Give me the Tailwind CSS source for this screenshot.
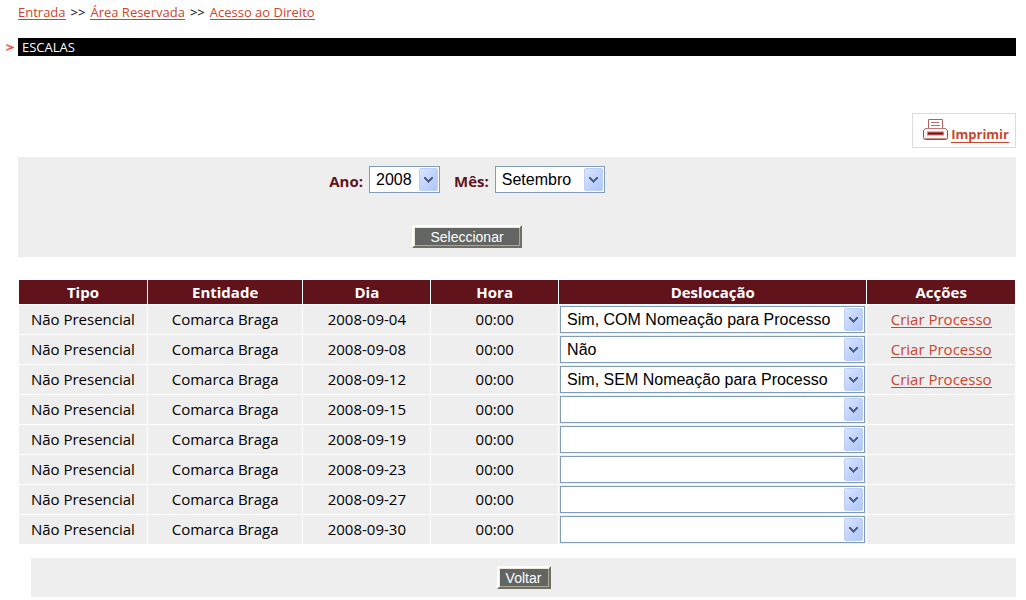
<!DOCTYPE html>
<html lang="pt">
<head>
<meta charset="utf-8">
<meta name="viewport" content="width=device-width, initial-scale=1">
<title>Escalas</title>
<script src="https://cdn.jsdelivr.net/npm/@tailwindcss/browser@4"></script>
</head>
<body class="bg-white font-['Open_Sans',sans-serif] text-black">
<div class="pr-[10px] pl-[18px]">
  <nav aria-label="Caminho" class="flex h-[38px] gap-[5px] pt-[2px] text-[13px] leading-5">
    <a href="#" class="h-[18px] border-b border-[#c9462c] text-[#c9462c]">Entrada</a><span>&gt;&gt;</span>
    <a href="#" class="h-[18px] border-b border-[#c9462c] text-[#c9462c]">Área Reservada</a><span>&gt;&gt;</span>
    <a href="#" class="h-[18px] border-b border-[#c9462c] text-[#c9462c]">Acesso ao Direito</a>
  </nav>
  <div class="-ml-3 flex items-center">
    <svg class="mr-1 h-2 w-2" viewBox="0 0 8 8" aria-hidden="true"><path d="M0 2 7 4.500 0 7" fill="none" stroke="#d65b43" stroke-width="1.500"/><path d="M0 2h3M0 7h3" stroke="#e59c8c"/></svg>
    <h1 class="grow bg-black pl-1 text-[13px] leading-[18px] text-white">ESCALAS</h1>
  </div>
  <div class="mt-[57px] flex justify-end">
    <a href="#" class="flex h-[35px] w-[104px] items-start justify-between border border-[#dcdcdc] pt-[5px] pr-[6px] pl-[10px] text-[13px] font-bold text-[#c9462c]">
      <svg class="h-[21px] w-[25px]" viewBox="0 0 25 21" fill="none" aria-hidden="true">
        <path d="M5.500 9.500V.5h14v9" fill="#fff" stroke="#b06060"/><path d="M8 3.500h8M8 6.500h9" stroke="#b86a6a"/>
        <path d="M2.500 9.500h20l2 2v7q0 2-2 2h-20q-2 0-2-2v-7z" fill="#fff3f0" stroke="#a64444"/>
        <path d="M3 9.500h19" stroke="#bd7a7a"/><path d="M4 12.500h17v4H4z" fill="#cf8080"/><path d="M5 14.500h15" stroke="#780f18" stroke-width="2"/>
        <path d="M2 19.500h21" stroke="#c78b8b"/>
      </svg>
      <span class="mt-[5px] h-[19px] border-b border-[#c9462c] leading-5">Imprimir</span>
    </a>
  </div>
  <form class="mt-[9px] flex h-[100px] flex-col items-center bg-[#eee] pt-[9px] pr-[100px]">
    <div class="flex items-center text-[15px] font-bold text-[#61131b]">
      <label for="ano" class="mt-1 mr-[6px]">Ano:</label>
      <div class="grid w-[71px] font-['Liberation_Sans',sans-serif] text-base font-normal text-black">
        <select id="ano" class="col-start-1 row-start-1 h-[27px] appearance-none border border-[#7f9db9] bg-white pl-[6px] leading-6"><option>2008</option></select>
        <svg class="pointer-events-none col-start-1 row-start-1 mr-[2px] h-[23px] w-[19px] self-center justify-self-end" aria-hidden="true"><use href="#drop"/></svg>
      </div>
      <label for="mes" class="mt-1 mr-[6px] ml-[14px]">Mês:</label>
      <div class="grid w-[110px] font-['Liberation_Sans',sans-serif] text-base font-normal text-black">
        <select id="mes" class="col-start-1 row-start-1 h-[27px] appearance-none border border-[#7f9db9] bg-white pl-[6px] leading-6"><option>Setembro</option></select>
        <svg class="pointer-events-none col-start-1 row-start-1 mr-[2px] h-[23px] w-[19px] self-center justify-self-end" aria-hidden="true"><use href="#drop"/></svg>
      </div>
    </div>
    <button type="button" class="mt-[32px] h-[23px] w-[110px] border-2 border-t-white border-r-[#716f64] border-b-[#716f64] border-l-white bg-[#636563] font-['Liberation_Sans',sans-serif] text-sm leading-[18px] text-white shadow-[inset_1px_1px_#ece9d8,inset_-1px_-1px_#aca899]">Seleccionar</button>
  </form>
  <table class="mt-[22px] w-full table-fixed border-separate border-spacing-px text-center text-[15px] leading-5">
    <colgroup><col class="w-[12.9%]"><col class="w-[15.6%]"><col class="w-[12.8%]"><col class="w-[12.8%]"><col class="w-[31%]"><col></colgroup>
    <thead><tr class="h-6 bg-[#61131b] text-white"><th scope="col">Tipo</th><th scope="col">Entidade</th><th scope="col">Dia</th><th scope="col">Hora</th><th scope="col">Deslocação</th><th scope="col">Acções</th></tr></thead>
    <tbody id="rows"></tbody>
  </table>
  <div class="mt-[13px] ml-[13px] flex h-[39px] items-center justify-center bg-[#eee]">
    <button type="button" class="h-[23px] w-[54px] border-2 border-t-white border-r-[#716f64] border-b-[#716f64] border-l-white bg-[#636563] font-['Liberation_Sans',sans-serif] text-sm leading-[18px] text-white shadow-[inset_1px_1px_#ece9d8,inset_-1px_-1px_#aca899]">Voltar</button>
  </div>
</div>
<svg class="absolute h-0 w-0" aria-hidden="true">
  <defs>
    <linearGradient id="face" x1="0" y1="0" x2="1" y2="1"><stop offset="0" stop-color="#dce6fe"/><stop offset=".5" stop-color="#c3d3fd"/><stop offset="1" stop-color="#abc8f8"/></linearGradient>
    <symbol id="drop" viewBox="0 0 19 23">
      <rect x=".5" y=".5" width="18" height="22" rx="1.5" fill="url(#face)" stroke="#bccdf6"/>
      <path d="M5 9h2v1h1v1h1v1h1v-1h1v-1h1V9h2v2h-1v1h-1v1h-1v1h-1v1H9v-1H8v-1H7v-1H6v-1H5z" fill="#4d6185"/>
    </symbol>
  </defs>
</svg>
<script>
const options = ['', 'Não', 'Sim, COM Nomeação para Processo', 'Sim, SEM Nomeação para Processo'];
const shifts = [['2008-09-04', 2], ['2008-09-08', 1], ['2008-09-12', 3], ['2008-09-15', 0], ['2008-09-19', 0], ['2008-09-23', 0], ['2008-09-27', 0], ['2008-09-30', 0]];
document.getElementById('rows').innerHTML = shifts.map(([day, chosen]) => `
<tr class="h-[29px] bg-[#eee]">
  <td class="pb-[2px]">Não Presencial</td><td class="pb-[2px]">Comarca Braga</td><td class="pb-[2px]">${day}</td><td class="pb-[2px]">00:00</td>
  <td class="p-px"><div class="grid font-['Liberation_Sans',sans-serif] text-base">
    <select aria-label="Deslocação ${day}" class="col-start-1 row-start-1 h-[27px] w-full appearance-none border border-[#7f9db9] bg-white pl-[6px] leading-6">${options.map((o, i) => `<option${i === chosen ? ' selected' : ''}>${o}</option>`).join('')}</select>
    <svg class="pointer-events-none col-start-1 row-start-1 mr-[2px] h-[23px] w-[19px] self-center justify-self-end" aria-hidden="true"><use href="#drop"/></svg>
  </div></td>
  <td class="pb-[2px]">${chosen ? '<a href="#" class="inline-block h-[19px] border-b border-[#c9462c] text-[#c9462c]">Criar Processo</a>' : ''}</td>
</tr>`).join('');
</script>
</body>
</html>
